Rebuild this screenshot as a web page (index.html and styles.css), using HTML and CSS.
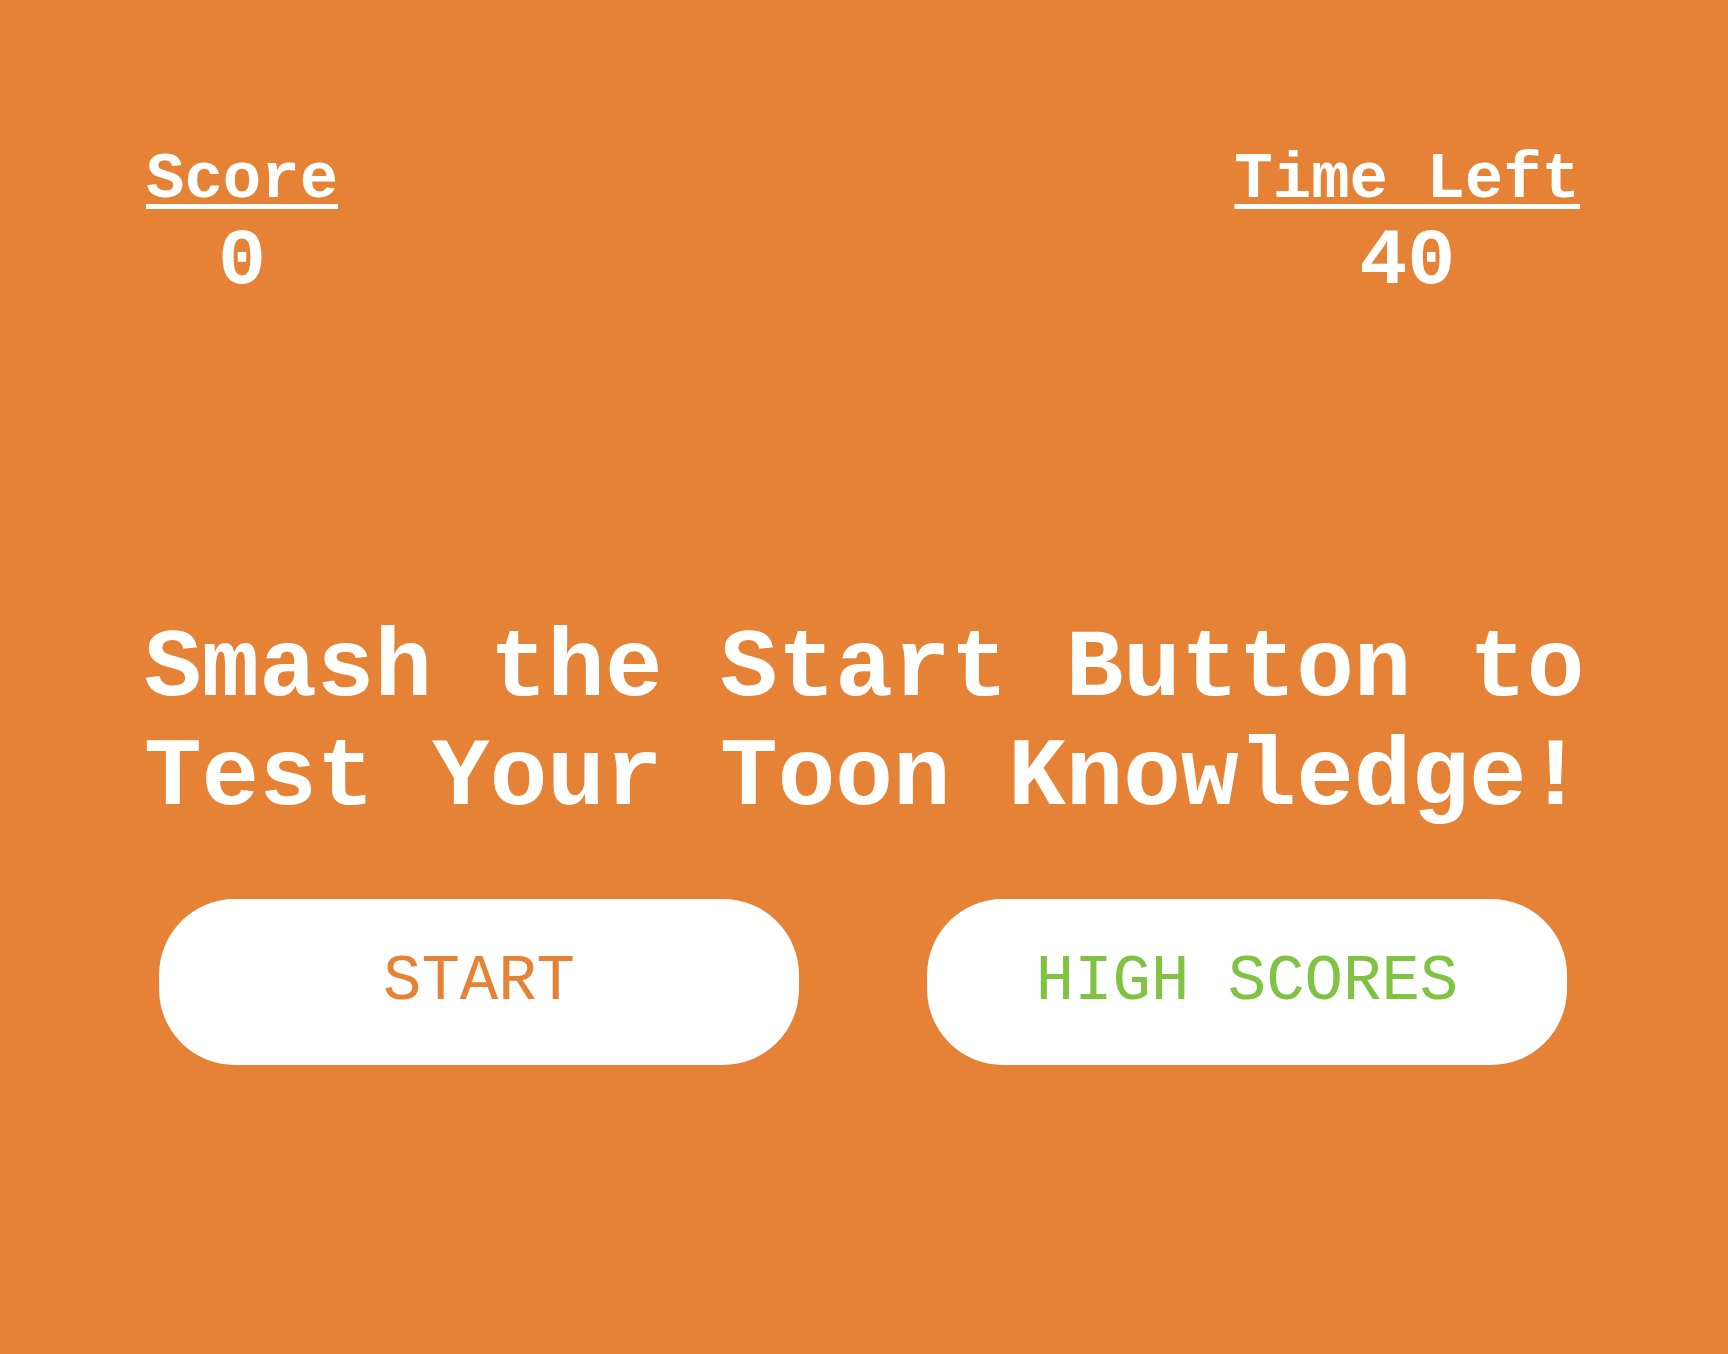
FILE: index.html
```html
<!DOCTYPE html>
<html lang="en">
<head>
<meta charset="utf-8">
<title>Toon Quiz</title>
<link rel="stylesheet" href="styles.css">
</head>
<body>
<main class="page">
  <header class="stats">
    <div class="stat">
      <div class="stat-label">Score</div>
      <div class="stat-value">0</div>
    </div>
    <div class="stat">
      <div class="stat-label">Time Left</div>
      <div class="stat-value">40</div>
    </div>
  </header>
  <h1 class="headline"><span class="line">Smash the Start Button to</span><span class="line">Test Your Toon Knowledge!</span></h1>
  <div class="actions">
    <button class="btn btn-start">START</button>
    <button class="btn btn-scores">HIGH SCORES</button>
  </div>
</main>
</body>
</html>
```

FILE: styles.css
```css
html, body {
  margin: 0;
  padding: 0;
  background: #e58236;
}
body {
  font-family: "Courier New", "Liberation Mono", monospace;
  color: #ffffff;
  min-height: 1354px;
}
.page {
  width: 1440px;
  margin: 0 auto;
  padding-top: 144px;
  display: flex;
  flex-direction: column;
}
.stats {
  display: flex;
  justify-content: space-between;
  padding: 0 4px 0 2px;
}
.stat {
  display: flex;
  flex-direction: column;
  align-items: center;
  font-weight: bold;
}
.stat-label {
  font-size: 64px;
  text-decoration: underline;
  text-decoration-thickness: 5px;
  text-underline-offset: 7px;
  line-height: normal;
}
.stat-value {
  font-size: 80px;
  line-height: normal;
}
.headline {
  margin: 308px 0 0 0;
  font-size: 96px;
  font-weight: bold;
  line-height: normal;
  display: flex;
  flex-direction: column;
}
.line {
  white-space: pre;
}
.actions {
  display: flex;
  justify-content: center;
  gap: 128px;
  margin-top: 66px;
  padding-right: 2px;
}
.btn {
  width: 640px;
  height: 166px;
  border: none;
  border-radius: 76px;
  background: #ffffff;
  font-family: "Courier New", "Liberation Mono", monospace;
  font-size: 64px;
  font-weight: normal;
  padding: 0;
}
.btn-start {
  color: #e58236;
}
.btn-scores {
  color: #80c242;
}
```
